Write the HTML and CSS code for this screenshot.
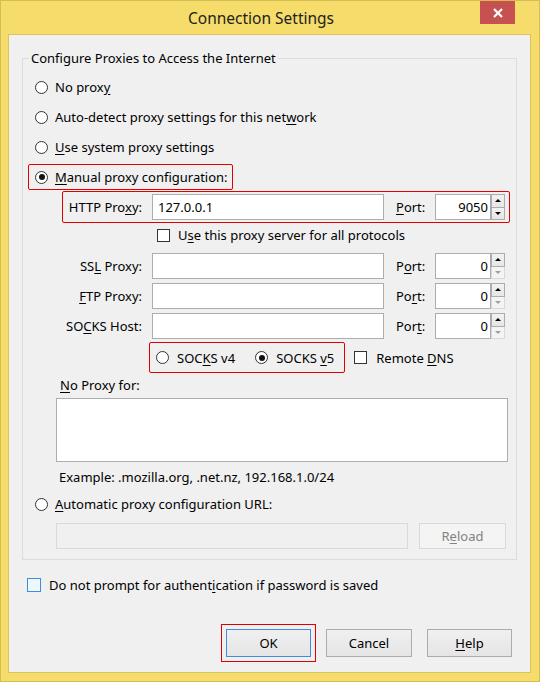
FILE: index.html
```html
<!doctype html>
<html>
<head>
<meta charset="utf-8">
<title>Connection Settings</title>
<link rel="stylesheet" href="styles.css">
</head>
<body>
<div class="window">
  <div class="titlebar">
    <div class="title">Connection Settings</div>
    <div class="close">
      <svg width="10" height="10" viewBox="0 0 10 10"><path d="M1 1L9 9M9 1L1 9" stroke="#fff" stroke-width="2.2"/></svg>
    </div>
  </div>

  <div class="client">
    <fieldset class="group">
      <legend>Configure Proxies to Access the Internet</legend>

      <div class="opt"><span class="radio"></span><span>No prox<u>y</u></span></div>
      <div class="opt"><span class="radio"></span><span>Auto-detect proxy settings for this net<u>w</u>ork</span></div>
      <div class="opt"><span class="radio"></span><span><u>U</u>se system proxy settings</span></div>
      <div class="opt manual hl"><span class="radio on"></span><span><u>M</u>anual proxy configuration:</span></div>

      <div class="proxy-row hl http">
        <span class="plabel">HTTP Pro<u>x</u>y:</span>
        <input class="host" type="text" value="127.0.0.1" readonly>
        <span class="port"><u>P</u>ort:</span>
        <input class="num" type="text" value="9050" readonly>
        <span class="spin"><span class="up"></span><span class="down"></span></span>
      </div>

      <div class="use-all"><span class="check"></span><span>U<u>s</u>e this proxy server for all protocols</span></div>

      <div class="proxy-row">
        <span class="plabel">SS<u>L</u> Proxy:</span>
        <input class="host" type="text" readonly>
        <span class="port">P<u>o</u>rt:</span>
        <input class="num" type="text" value="0" readonly>
        <span class="spin"><span class="up"></span><span class="down off"></span></span>
      </div>
      <div class="proxy-row">
        <span class="plabel"><u>F</u>TP Proxy:</span>
        <input class="host" type="text" readonly>
        <span class="port">Po<u>r</u>t:</span>
        <input class="num" type="text" value="0" readonly>
        <span class="spin"><span class="up"></span><span class="down off"></span></span>
      </div>
      <div class="proxy-row">
        <span class="plabel">SO<u>C</u>KS Host:</span>
        <input class="host" type="text" readonly>
        <span class="port">Por<u>t</u>:</span>
        <input class="num" type="text" value="0" readonly>
        <span class="spin"><span class="up"></span><span class="down off"></span></span>
      </div>

      <div class="socks-line">
        <div class="socks-box hl">
          <span class="sopt v4"><span class="radio"></span><span>SOC<u>K</u>S v4</span></span>
          <span class="sopt"><span class="radio on"></span><span>SOCKS <u>v</u>5</span></span>
        </div>
        <span class="sopt dns"><span class="check"></span><span>Remote <u>D</u>NS</span></span>
      </div>

      <div class="noproxy-label"><u>N</u>o Proxy for:</div>
      <textarea class="noproxy" readonly></textarea>
      <div class="example">Example: .mozilla.org, .net.nz, 192.168.1.0/24</div>

      <div class="opt auto"><span class="radio"></span><span><u>A</u>utomatic proxy configuration URL:</span></div>
      <div class="url-row">
        <input class="url" type="text" disabled>
        <button class="btn reload" disabled>R<u>e</u>load</button>
      </div>
    </fieldset>

    <div class="nosave"><span class="check focus"></span><span>Do not prompt for authent<u>i</u>cation if password is saved</span></div>

    <div class="buttons">
      <button class="btn default">OK</button>
      <button class="btn">Cancel</button>
      <button class="btn"><u>H</u>elp</button>
    </div>
  </div>
</div>
</body>
</html>
```

FILE: styles.css
```css
body{margin:0;font:13px "Noto Sans",sans-serif;color:#000;}
u{text-decoration:underline;text-underline-offset:2px;}
input,textarea,button{font:inherit;color:inherit;margin:0;box-sizing:border-box;}

.window{width:540px;height:682px;box-sizing:border-box;border:1px solid #d6bd50;background:#f6dd6b;padding:0 8px 8px 7px;display:flex;flex-direction:column;}
.titlebar{height:33px;display:flex;align-items:flex-start;}
.title{flex:1;text-align:center;padding-left:34px;font-size:15.5px;line-height:35px;color:#1e1e1e;}
.close{width:35px;height:23px;background:#c75050;margin-right:16px;display:flex;align-items:center;justify-content:center;}
.close svg{display:block;}

.client{flex:1;background:#f0f0f0;border:1px solid #dac460;display:flex;flex-direction:column;}

/* group box */
.group{margin:14px 13px 0 13px;padding:5px 0 10px 0;border:1px solid #dcdcdc;min-width:0;}
.group legend{margin-left:6px;padding:0 2px;line-height:18px;}

.radio{width:13px;height:13px;box-sizing:border-box;border:1px solid #333;border-radius:50%;background:#fff;display:flex;align-items:center;justify-content:center;flex:none;}
.radio.on::after{content:"";width:6px;height:6px;border-radius:50%;background:#111;}
.check{width:13px;height:13px;box-sizing:border-box;border:1px solid #333;background:#fff;flex:none;}
.check.focus{width:14px;height:14px;border-color:#3c8ee0;background:#eef6fe;}

.hl{border:1px solid #e00000;border-radius:2px;}

.opt{display:flex;align-items:center;gap:7px;height:30px;padding-left:12px;}
.opt.manual{box-sizing:border-box;width:fit-content;height:26px;margin:2px 0 1px 5px;padding:0 4px 0 6px;}
.opt.auto{height:24px;}

.proxy-row{display:flex;align-items:center;box-sizing:border-box;width:fit-content;height:30px;margin-left:39px;padding-right:4px;border:1px solid transparent;}
.proxy-row.http{height:32px;border-color:#e00000;}
.plabel{width:79px;text-align:right;margin-right:10px;}
.host{width:232px;height:26px;border:1px solid #abadb3;background:#fff;padding:0 5px;outline:none;}
.port{width:39px;margin-left:12px;}
.num{width:56px;height:26px;border:1px solid #abadb3;background:#fff;padding:0 2px;text-align:right;outline:none;}
.spin{display:flex;flex-direction:column;width:14px;height:26px;}
.spin span{flex:1;box-sizing:border-box;border:1px solid #acacac;background:linear-gradient(#f2f2f2,#e6e6e6);display:flex;align-items:center;justify-content:center;}
.spin .down{border-top:none;}
.spin .up::after{content:"";border-left:3px solid transparent;border-right:3px solid transparent;border-bottom:3px solid #000;}
.spin .down::after{content:"";border-left:3px solid transparent;border-right:3px solid transparent;border-top:3px solid #000;}
.spin .down.off{border-color:#d9d9d9;background:#f4f4f4;}
.spin .down.off::after{border-top-color:#a0a0a0;}

.use-all{display:flex;align-items:center;gap:8px;height:24px;margin-bottom:4px;padding-left:134px;}

.socks-line{display:flex;align-items:center;height:31px;margin-top:1px;padding-left:126px;}
.socks-box{display:flex;align-items:center;box-sizing:border-box;height:31px;padding:0 10px 0 6px;}
.sopt{display:flex;align-items:center;gap:8px;}
.sopt.v4{margin-right:20px;}
.sopt.dns{margin-left:9px;gap:9px;}

.noproxy-label{height:24px;line-height:24px;padding-left:37px;}
.noproxy{display:block;width:452px;height:64px;margin:1px 0 0 33px;border:1px solid #abadb3;background:#fff;resize:none;outline:none;}
.example{height:30px;line-height:30px;padding-left:36px;}

.url-row{display:flex;margin-top:7px;padding-left:33px;}
.url{width:352px;height:26px;border:1px solid #d9d9d9;background:#f0f0f0;}

.btn{height:28px;width:85px;border:1px solid #acacac;background:linear-gradient(#f0f0f0,#e5e5e5);padding:0;cursor:default;}
.btn.reload{width:87px;height:26px;margin-left:11px;border-color:#d9d9d9;background:#f4f4f4;color:#838383;}
.btn.default{border-color:#3c8ee0;background:linear-gradient(#f0f0f0,#e5e5e5);outline:1px solid #e00000;outline-offset:4px;}

.nosave{display:flex;align-items:center;gap:8px;height:20px;margin-top:15px;padding-left:18px;}

.buttons{margin-top:auto;display:flex;justify-content:flex-end;gap:15px;padding:0 18px 15px 0;}
.buttons .btn:nth-child(2){width:86px;}
```
